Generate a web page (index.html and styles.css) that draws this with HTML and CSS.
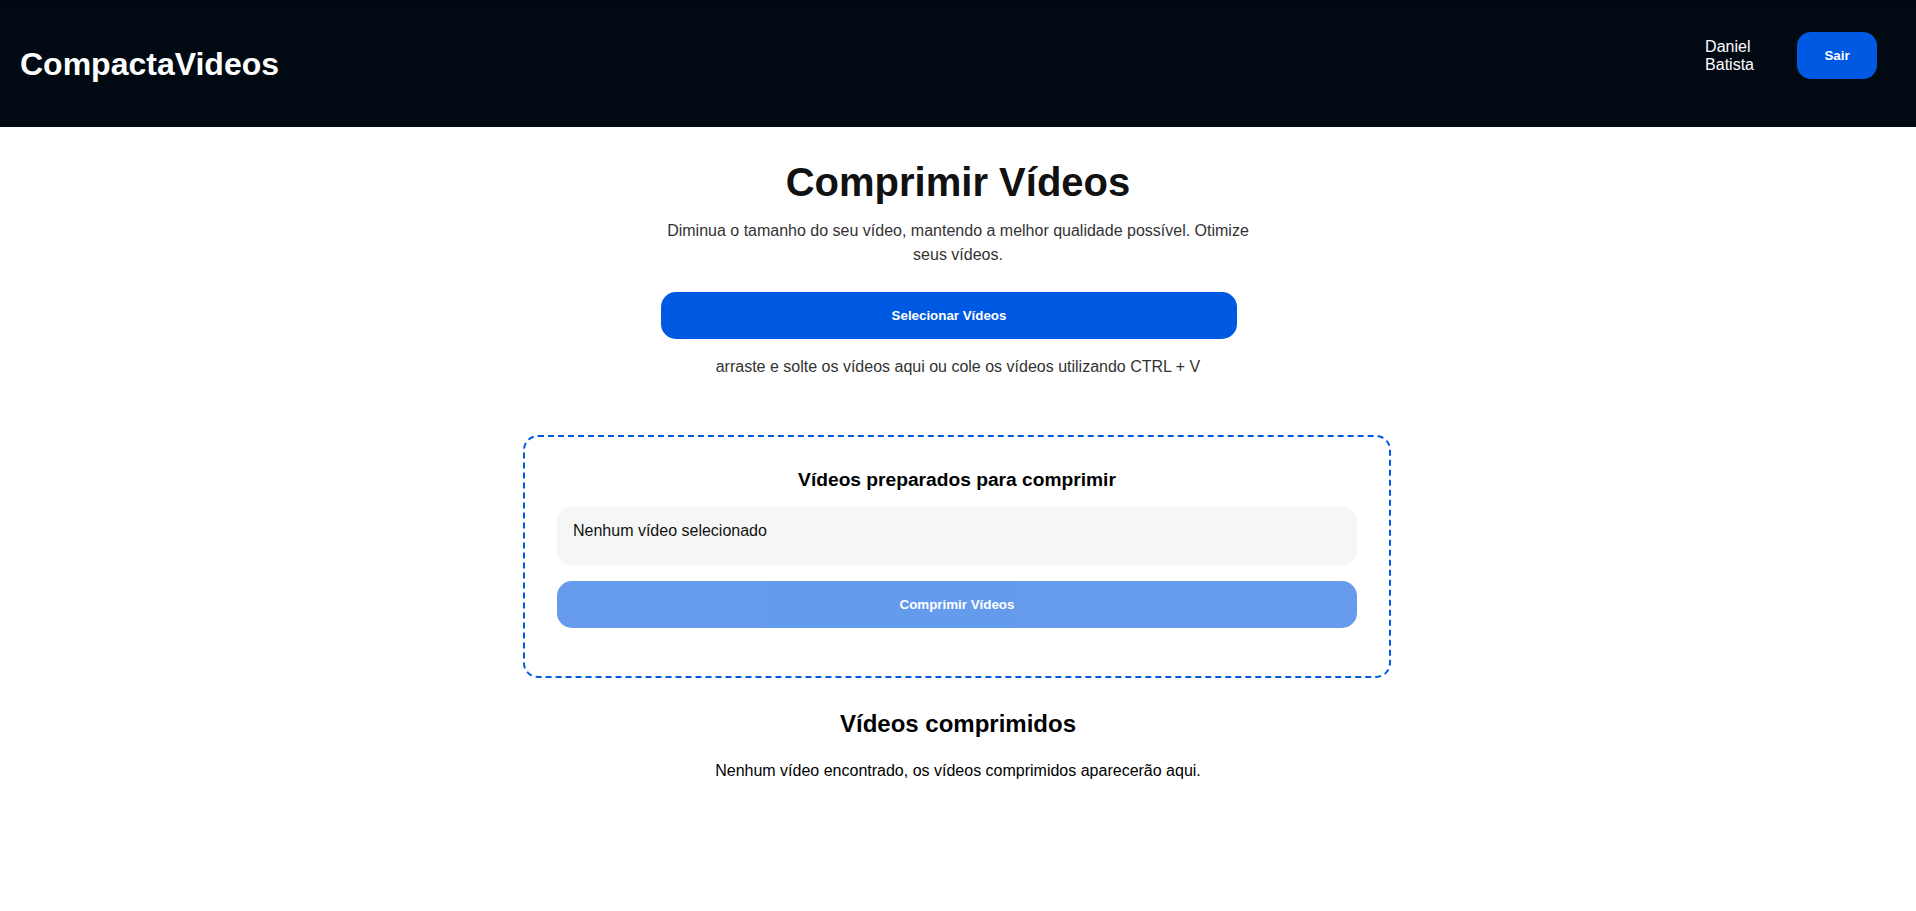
FILE: index.html
```html
<!DOCTYPE html>
<html lang="pt-BR">
<head>
<meta charset="utf-8">
<title>CompactaVideos</title>
<link rel="stylesheet" href="styles.css">
</head>
<body>
<header class="topbar">
  <div class="brand">CompactaVideos</div>
  <nav class="user-nav">
    <span class="user-name">Daniel Batista</span>
    <button class="btn btn-sair" type="button">Sair</button>
  </nav>
</header>
<main class="main">
  <section class="intro">
    <h1 class="title">Comprimir Vídeos</h1>
    <p class="subtitle">Diminua o tamanho do seu vídeo, mantendo a melhor qualidade possível. Otimize seus vídeos.</p>
    <button class="btn btn-select" type="button">Selecionar Vídeos</button>
    <p class="hint">arraste e solte os vídeos aqui ou cole os vídeos utilizando CTRL + V</p>
  </section>
  <section class="dropzone">
    <h3 class="dz-title">Vídeos preparados para comprimir</h3>
    <div class="queue">Nenhum vídeo selecionado</div>
    <button class="btn btn-compress" type="button" disabled>Comprimir Vídeos</button>
  </section>
  <section class="results">
    <h2 class="results-title">Vídeos comprimidos</h2>
    <p class="results-empty">Nenhum vídeo encontrado, os vídeos comprimidos aparecerão aqui.</p>
  </section>
</main>
</body>
</html>
```

FILE: styles.css
```css
* {
  box-sizing: border-box;
}

body {
  margin: 0;
  font-family: "Liberation Sans", Arial, sans-serif;
  background: #ffffff;
  color: #000000;
}

.topbar {
  height: 127px;
  background: #010a13;
  border-top: 1px solid #00050b;
  display: flex;
  align-items: center;
  justify-content: space-between;
  padding: 0 39px 0 20px;
}

.brand {
  color: #ffffff;
  font-size: 32px;
  font-weight: bold;
  line-height: 37px;
  margin-top: 1px;
}

.user-nav {
  display: flex;
  align-items: center;
  gap: 43px;
  margin-bottom: 17px;
}

.user-name {
  color: #ffffff;
  font-size: 16px;
  line-height: 18px;
  width: min-content;
}

.btn {
  font-family: "Liberation Sans", Arial, sans-serif;
  font-size: 13.333px;
  font-weight: bold;
  color: #ffffff;
  background: #0059e2;
  border: none;
  line-height: 15px;
  cursor: pointer;
}

.btn-sair {
  width: 80px;
  height: 47px;
  border-radius: 14px;
}

.main {
  padding: 32px 0 40px;
  display: flex;
  flex-direction: column;
  align-items: center;
}

.intro {
  width: 600px;
  display: flex;
  flex-direction: column;
  align-items: center;
  text-align: center;
}

.title {
  margin: 0;
  font-size: 40px;
  line-height: 46px;
  font-weight: bold;
  color: #111111;
}

.subtitle {
  margin: 14px 0 0;
  font-size: 16px;
  line-height: 24px;
  color: #333333;
}

.btn-select {
  margin: 25px 18px 0 0;
  width: 576px;
  height: 47px;
  border-radius: 15px;
}

.hint {
  margin: 19px 0 0;
  font-size: 16px;
  line-height: 18px;
  color: #333333;
}

.dropzone {
  margin-top: 59px;
  width: 868px;
  margin-right: 2px;
  border: 2px dashed #0059e2;
  border-radius: 15px;
  padding: 32px 32px 48px;
  display: flex;
  flex-direction: column;
  gap: 16px;
}

.dz-title {
  margin: 0;
  text-align: center;
  font-size: 19.2px;
  line-height: 22px;
  font-weight: bold;
  color: #000000;
}

.queue {
  background: #f6f6f6;
  border-radius: 14px;
  height: 58px;
  padding: 15px 16px 0;
  font-size: 16px;
  line-height: 18px;
  color: #111111;
}

.btn-compress {
  height: 47px;
  border-radius: 15px;
  opacity: 0.6;
  cursor: default;
}

.results {
  margin-top: 32px;
  text-align: center;
}

.results-title {
  margin: 0 0 24px;
  font-size: 24px;
  line-height: 28px;
  font-weight: bold;
  color: #000000;
}

.results-empty {
  margin: 0;
  font-size: 16px;
  line-height: 18px;
  color: #000000;
}
```
